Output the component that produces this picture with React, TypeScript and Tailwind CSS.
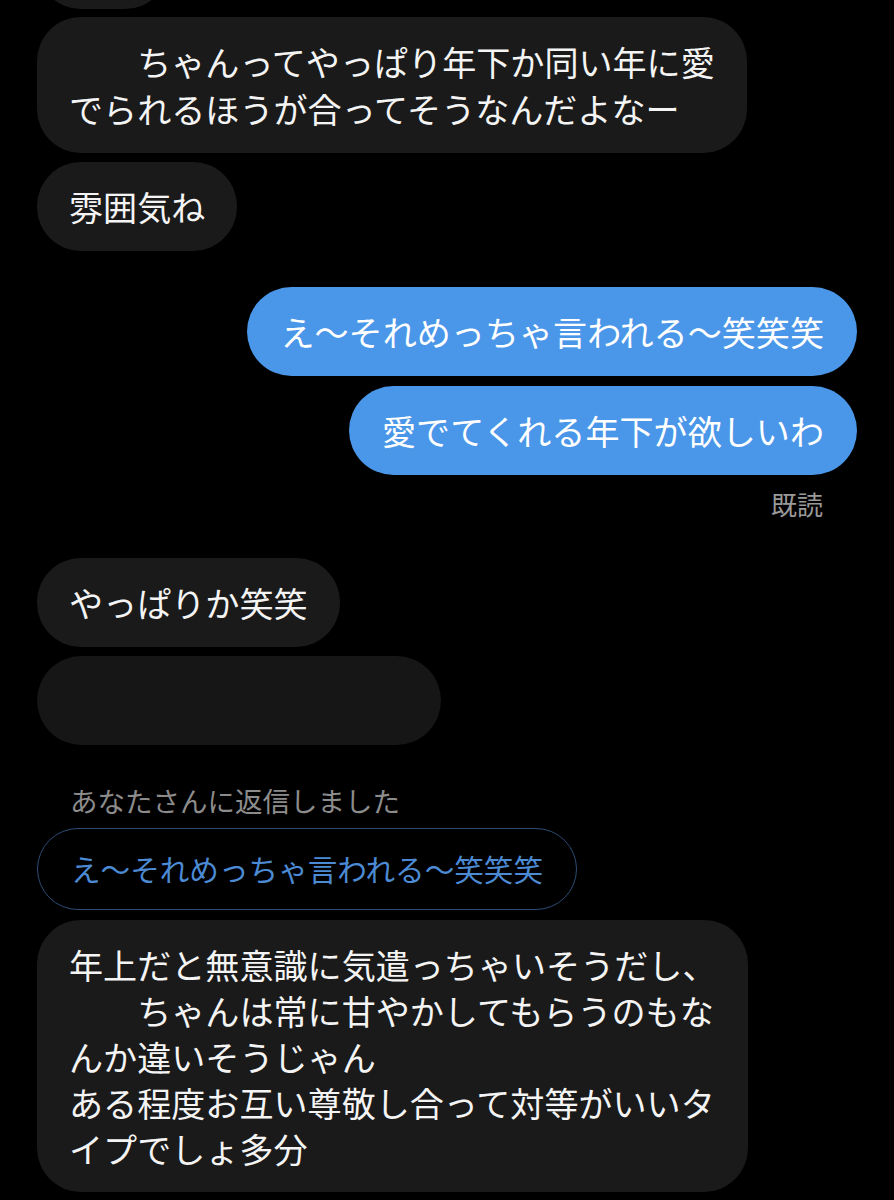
import React from 'react';

const FONT = { fontFamily: '"Noto Sans CJK JP", "Noto Sans", sans-serif' };

function Bubble({
  lines,
  className = '',
}: {
  lines: string[];
  className?: string;
}) {
  return (
    <div
      className={`self-start whitespace-nowrap rounded-[44px] bg-[#1a1a1a] px-[32px] py-[21px] text-[34.1px] leading-[47px] text-[#f4f4f4] ${className}`}
    >
      {lines.map((line, i) => (
        <div key={i}>{line}</div>
      ))}
    </div>
  );
}

function MyBubble({ text, className = '' }: { text: string; className?: string }) {
  return (
    <div
      className={`self-end whitespace-nowrap rounded-[45px] bg-[#4a96e8] px-[33px] py-[21px] text-[34.1px] leading-[47px] text-white ${className}`}
    >
      {text}
    </div>
  );
}

export default function App() {
  return (
    <div className="h-[1200px] w-full overflow-hidden bg-black" style={FONT}>
      <div className="flex flex-col px-[37px]">
        {/* bubble cut off at the top, its text is out of view */}
        <Bubble lines={['　　']} className="-mt-[80px]" />

        <Bubble
          className="mt-[8px]"
          lines={['　　ちゃんってやっぱり年下か同い年に愛', 'でられるほうが合ってそうなんだよなー']}
        />
        <Bubble className="mt-[9px]" lines={['雰囲気ね']} />

        <MyBubble className="mt-[36px]" text="え〜それめっちゃ言われる〜笑笑笑" />
        <MyBubble className="mt-[10px]" text="愛でてくれる年下が欲しいわ" />
        <div className="mt-[14px] self-end pr-[34px] text-[26px] leading-[30px] text-[#9a9a9a]">
          既読
        </div>

        <Bubble className="mt-[39px]" lines={['やっぱりか笑笑']} />
        <div className="mt-[9px] h-[89px] w-[404px] rounded-[45px] bg-[#161616]" />

        <div className="mt-[39px] pl-[33px] text-[27.5px] leading-[32px] text-[#8c8c8c]">
          あなたさんに返信しました
        </div>
        <div className="mt-[12px] self-start whitespace-nowrap rounded-[41px] border border-[#2c4c74] px-[33px] py-[22px] text-[29.6px] leading-[36px] text-[#4c8bd4]">
          え〜それめっちゃ言われる〜笑笑笑
        </div>

        <div className="mt-[10px] self-start whitespace-nowrap rounded-[44px] bg-[#1a1a1a] px-[32px] py-[21px] text-[34.1px] leading-[46px] text-[#f4f4f4]">
          <div>年上だと無意識に気遣っちゃいそうだし、</div>
          <div>　　ちゃんは常に甘やかしてもらうのもな</div>
          <div>んか違いそうじゃん</div>
          <div>ある程度お互い尊敬し合って対等がいいタ</div>
          <div>イプでしょ多分</div>
        </div>
      </div>
    </div>
  );
}
